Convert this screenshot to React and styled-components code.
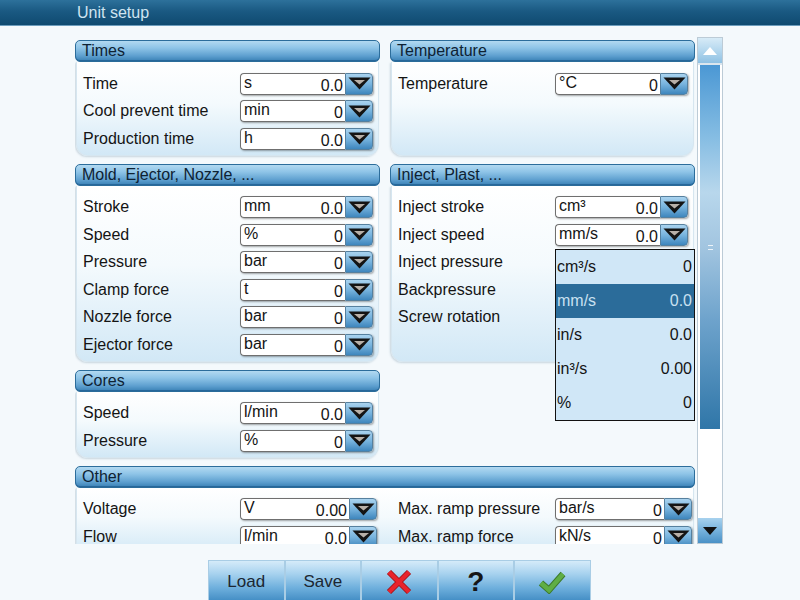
import React from "react";
import styled, { createGlobalStyle } from "styled-components";

const GlobalStyle = createGlobalStyle`
  html, body {
    margin: 0;
    padding: 0;
    background: #f4f9fc;
  }
  body {
    font-family: "Liberation Sans", Arial, sans-serif;
    color: #141414;
  }
`;

const times = [
  ["Time", "s", "0.0"],
  ["Cool prevent time", "min", "0"],
  ["Production time", "h", "0.0"],
];
const temperature = [["Temperature", "°C", "0"]];
const mold = [
  ["Stroke", "mm", "0.0"],
  ["Speed", "%", "0"],
  ["Pressure", "bar", "0"],
  ["Clamp force", "t", "0"],
  ["Nozzle force", "bar", "0"],
  ["Ejector force", "bar", "0"],
];
// the last three selects sit under the open list, so only their labels show
const inject = [
  ["Inject stroke", "cm³", "0.0"],
  ["Inject speed", "mm/s", "0.0", true],
  ["Inject pressure"],
  ["Backpressure"],
  ["Screw rotation"],
];
const cores = [
  ["Speed", "l/min", "0.0"],
  ["Pressure", "%", "0"],
];
const otherLeft = [
  ["Voltage", "V", "0.00"],
  ["Flow", "l/min", "0.0"],
];
const otherRight = [
  ["Max. ramp pressure", "bar/s", "0"],
  ["Max. ramp force", "kN/s", "0"],
];
const speedUnits = [
  ["cm³/s", "0"],
  ["mm/s", "0.0", true],
  ["in/s", "0.0"],
  ["in³/s", "0.00"],
  ["%", "0"],
];

export default function App() {
  return (
    <Screen>
      <GlobalStyle />
      <TitleBar>Unit setup</TitleBar>

      <Main>
        <Viewport>
          <GroupGrid>
            <Group title="Times" rows={times} />
            <Group title="Temperature" rows={temperature} />
            <Group title="Mold, Ejector, Nozzle, ..." rows={mold} />
            <Group title="Inject, Plast, ..." rows={inject} />
            <Group title="Cores" rows={cores} />
            <span />
            <GroupBox $wide>
              <GroupHeader>Other</GroupHeader>
              <GroupBody $split>
                <Column>
                  {otherLeft.map((r) => (
                    <Row key={r[0]} data={r} />
                  ))}
                </Column>
                <Column>
                  {otherRight.map((r) => (
                    <Row key={r[0]} data={r} />
                  ))}
                </Column>
              </GroupBody>
            </GroupBox>
          </GroupGrid>
        </Viewport>

        <ScrollBar>
          <ScrollButton $up>
            <svg width="14" height="8" viewBox="0 0 14 8">
              <polygon points="0,8 14,8 7,0" fill="#ffffff" />
            </svg>
          </ScrollButton>
          <Thumb>
            <Grip />
          </Thumb>
          <Track />
          <ScrollButton>
            <svg width="14" height="8" viewBox="0 0 14 8">
              <polygon points="0,0 14,0 7,8" fill="#111" />
            </svg>
          </ScrollButton>
        </ScrollBar>
      </Main>

      <ButtonBar>
        <ActionButton>Load</ActionButton>
        <ActionButton>Save</ActionButton>
        <ActionButton>
          <svg width="26" height="26" viewBox="0 0 26 26">
            <path d="M3 3 L23 23 M23 3 L3 23" stroke="#a0141a" strokeWidth="6" />
            <path d="M3 3 L23 23 M23 3 L3 23" stroke="#e8232c" strokeWidth="4.2" />
          </svg>
        </ActionButton>
        <ActionButton>
          <Question>?</Question>
        </ActionButton>
        <ActionButton>
          <svg width="28" height="24" viewBox="0 0 28 24">
            <path d="M3 13 L11 20 L25 4" fill="none" stroke="#3d7a2c" strokeWidth="6.5" />
            <path d="M3 13 L11 20 L25 4" fill="none" stroke="#5fae45" strokeWidth="4.5" />
          </svg>
        </ActionButton>
      </ButtonBar>
    </Screen>
  );
}

function Group({ title, rows }) {
  return (
    <GroupBox>
      <GroupHeader>{title}</GroupHeader>
      <GroupBody>
        <Column>
          {rows.map((r) => (
            <Row key={r[0]} data={r} />
          ))}
        </Column>
      </GroupBody>
    </GroupBox>
  );
}

function Row({ data }) {
  const [label, unit, value, open] = data;
  return (
    <RowLine>
      <Label>{label}</Label>
      {unit && (
        <Select>
          <Field>
            <Unit>{unit}</Unit>
            <Value>{value}</Value>
          </Field>
          <DropButton>
            <svg width="23" height="13" viewBox="0 0 23 13">
              <polygon points="0.5,0.5 22.5,0.5 11.5,12.5" fill="#141414" />
              <polygon points="6,3 17,3 11.5,7.5" fill="#b8b0a8" />
            </svg>
          </DropButton>
          {open && (
            <DropList>
              {speedUnits.map(([u, v, sel]) => (
                <DropItem key={u} $selected={sel}>
                  <span>{u}</span>
                  <span>{v}</span>
                </DropItem>
              ))}
            </DropList>
          )}
        </Select>
      )}
    </RowLine>
  );
}

const Screen = styled.div`
  width: 800px;
  height: 600px;
  overflow: hidden;
  display: flex;
  flex-direction: column;
`;

const TitleBar = styled.div`
  height: 25px;
  line-height: 25px;
  padding-left: 77px;
  font-size: 16px;
  color: #cfe4f1;
  background: linear-gradient(to bottom, #2d719b 0%, #1a5982 45%, #0f4a70 100%);
  border-bottom: 1px solid #6c9dbd;
`;

const Main = styled.div`
  display: flex;
  gap: 2px;
  margin: 11px 0 0 75px;
  height: 507px;
`;

const Viewport = styled.div`
  width: 620px;
  height: 100%;
  overflow: hidden;
  padding-top: 3px;
  box-sizing: border-box;
`;

const GroupGrid = styled.div`
  display: grid;
  grid-template-columns: 305px 305px;
  column-gap: 10px;
  row-gap: 8px;
`;

const GroupBox = styled.div`
  display: flex;
  flex-direction: column;
  grid-column: ${(p) => (p.$wide ? "1 / span 2" : "auto")};
`;

const GroupHeader = styled.div`
  height: 20px;
  line-height: 20px;
  padding-left: 6px;
  font-size: 16px;
  color: #0e2233;
  border: 1px solid #2c6d9b;
  border-radius: 5px;
  background: linear-gradient(
    to bottom,
    #b2d9f1 0%,
    #8ec4e7 35%,
    #5d9fcf 75%,
    #3a81b5 100%
  );
  box-shadow: inset 0 -1px 0 #27679a;
`;

const GroupBody = styled.div`
  flex: 1;
  display: grid;
  grid-template-columns: ${(p) => (p.$split ? "305px 305px" : "1fr")};
  column-gap: 10px;
  padding: 8px 0 2px 0;
  margin: 0 1px;
  border: 1px solid #d6e6f0;
  border-top: none;
  border-radius: 0 0 12px 12px;
  background: linear-gradient(to bottom, #ffffff 0%, #f4fafd 45%, #d2e8f6 100%);
  box-shadow: -1px 1px 2px rgba(70, 110, 140, 0.25);
`;

const Column = styled.div`
  display: flex;
  flex-direction: column;
  padding: 0 5px 0 6px;
`;

const RowLine = styled.div`
  display: grid;
  grid-template-columns: 157px 1fr;
  align-items: center;
  height: 27.5px;
`;

const Label = styled.div`
  font-size: 16px;
  color: #141414;
  white-space: nowrap;
`;

const Select = styled.div`
  position: relative;
  display: flex;
  height: 22px;
  box-shadow: 1px 1px 2px rgba(0, 0, 0, 0.35);
  border-radius: 4px;
`;

const Field = styled.div`
  flex: 1;
  display: flex;
  justify-content: space-between;
  padding: 0 2px 0 3px;
  background: #ffffff;
  border: 1px solid #6f6f6f;
  border-right: none;
  border-radius: 4px 0 0 4px;
  font-size: 16px;
  color: #141414;
`;

const Unit = styled.span`
  align-self: flex-start;
  line-height: 17px;
`;

const Value = styled.span`
  align-self: flex-end;
  line-height: 17px;
`;

const DropButton = styled.div`
  width: 26px;
  display: flex;
  align-items: center;
  justify-content: center;
  border: 1px solid #56809e;
  border-radius: 0 4px 4px 0;
  background: linear-gradient(to bottom, #a9d3ef 0%, #78b4de 50%, #3e86bd 100%);
`;

const DropList = styled.div`
  position: absolute;
  top: calc(100% + 3px);
  left: 0;
  width: 138px;
  z-index: 5;
  border: 1px solid #111;
  background: #d0e7f7;
`;

const DropItem = styled.div`
  height: 34px;
  display: flex;
  align-items: center;
  justify-content: space-between;
  padding: 0 2px 0 1px;
  font-size: 16px;
  color: ${(p) => (p.$selected ? "#c9e1f1" : "#141414")};
  background: ${(p) => (p.$selected ? "#2b6c9a" : "transparent")};
`;

const ScrollBar = styled.div`
  width: 26px;
  height: 100%;
  box-sizing: border-box;
  display: flex;
  flex-direction: column;
  border: 1px solid #bccbd6;
  background: #ffffff;
`;

const ScrollButton = styled.div`
  height: 25px;
  display: flex;
  align-items: center;
  justify-content: center;
  border-bottom: ${(p) => (p.$up ? "2px solid #dbe6ee" : "none")};
  background: ${(p) =>
    p.$up
      ? "linear-gradient(to bottom, #d7ebf7 0%, #b4d7ee 50%, #8fc1e3 100%)"
      : "linear-gradient(to bottom, #a8d2ee 0%, #76b2dd 50%, #4a91c6 100%)"};
`;

const Thumb = styled.div`
  height: 364px;
  margin: 0 2px;
  display: flex;
  align-items: center;
  justify-content: center;
  background: linear-gradient(
    to bottom,
    #4b98d4 0%,
    #86bde3 20%,
    #b8d7ec 35%,
    #a2c5e0 50%,
    #6ea3cc 70%,
    #2f76a8 100%
  );
`;

const Grip = styled.div`
  width: 5px;
  height: 3px;
  border-top: 1px solid rgba(255, 255, 255, 0.8);
  border-bottom: 1px solid rgba(255, 255, 255, 0.8);
`;

const Track = styled.div`
  flex: 1;
  background: #ffffff;
`;

const ButtonBar = styled.div`
  display: flex;
  margin: 16px 0 0 208px;
`;

const ActionButton = styled.div`
  box-sizing: border-box;
  width: 76.5px;
  height: 42px;
  display: flex;
  align-items: center;
  justify-content: center;
  font-size: 17px;
  color: #1c2732;
  border: 1px solid #a9cde5;
  border-bottom: none;
  background: linear-gradient(
    to bottom,
    #d5ebf9 0%,
    #a9d3ef 30%,
    #6fb0dd 65%,
    #3f8ac2 100%
  );
`;

const Question = styled.span`
  font-size: 28px;
  font-weight: bold;
  color: #161616;
`;
